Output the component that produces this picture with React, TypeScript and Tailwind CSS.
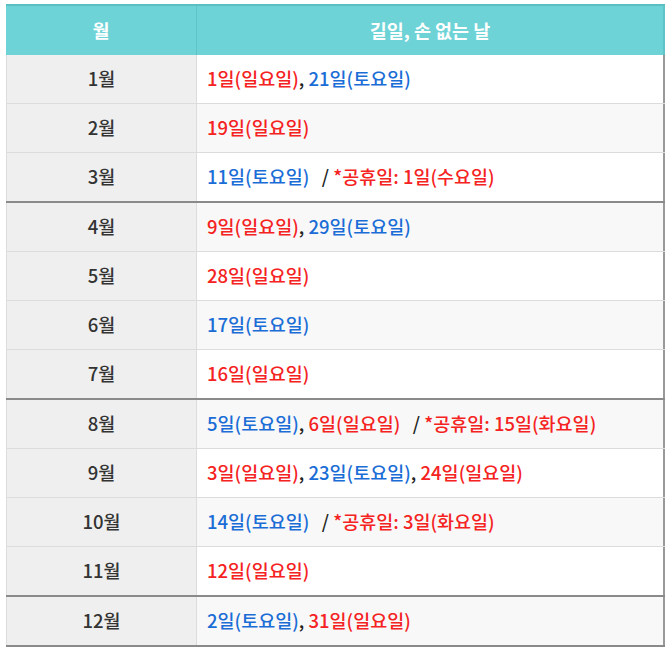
import React from "react";

type Part = { text: string; tone: "red" | "blue" | "black" };

type Row = {
  month: string;
  parts: Part[];
  thick?: boolean;
};

const r = (text: string): Part => ({ text, tone: "red" });
const b = (text: string): Part => ({ text, tone: "blue" });
const k = (text: string): Part => ({ text, tone: "black" });

const rows: Row[] = [
  { month: "1월", parts: [r("1일(일요일)"), k(", "), b("21일(토요일)")] },
  { month: "2월", parts: [r("19일(일요일)")] },
  { month: "3월", parts: [b("11일(토요일)"), k("\u00a0\u00a0 / "), r("*공휴일: 1일(수요일)")], thick: true },
  { month: "4월", parts: [r("9일(일요일)"), k(", "), b("29일(토요일)")] },
  { month: "5월", parts: [r("28일(일요일)")] },
  { month: "6월", parts: [b("17일(토요일)")] },
  { month: "7월", parts: [r("16일(일요일)")], thick: true },
  { month: "8월", parts: [b("5일(토요일)"), k(", "), r("6일(일요일)"), k("\u00a0\u00a0 / "), r("*공휴일: 15일(화요일)")] },
  { month: "9월", parts: [r("3일(일요일)"), k(", "), b("23일(토요일)"), k(", "), r("24일(일요일)")] },
  { month: "10월", parts: [b("14일(토요일)"), k("\u00a0\u00a0 / "), r("*공휴일: 3일(화요일)")] },
  { month: "11월", parts: [r("12일(일요일)")], thick: true },
  { month: "12월", parts: [b("2일(토요일)"), k(", "), r("31일(일요일)")], thick: true },
];

const toneClass = {
  red: "text-[#f52222]",
  blue: "text-[#1a6dd6]",
  black: "text-[#222]",
};

export default function App() {
  return (
    <div
      className="min-h-screen bg-white pl-[6px] pt-[4px]"
      style={{ fontFamily: '"Noto Sans CJK KR", "Noto Sans", sans-serif' }}
    >
      <div className="w-[659px]">
        <div className="flex h-[51px] border-t-2 border-[#5abfc3] bg-[#6dd3d6] text-[18.5px] font-bold text-white">
          <div className="flex w-[191px] items-center justify-center border-r border-[#5fc4c8]">월</div>
          <div className="flex flex-1 items-center justify-center border-r-2 border-[#5fc4c8]">길일, 손 없는 날</div>
        </div>
        {rows.map((row, i) => (
          <div
            key={row.month}
            className={`flex h-[49px] ${row.thick ? "h-[50px] border-b-2 border-[#8a8a8a]" : "border-b border-[#dcdcdc]"}`}
          >
            <div className="flex w-[191px] items-center justify-center border-x border-[#dcdcdc] bg-[#efefef] text-[18.5px] font-medium text-[#333]">
              {row.month}
            </div>
            <div
              className={`flex flex-1 items-center border-r-2 border-[#999] pl-[10px] text-[18.5px] font-medium ${
                i % 2 === 0 ? "bg-white" : "bg-[#f8f8f8]"
              }`}
            >
              <span className="whitespace-pre">
                {row.parts.map((p, j) => (
                  <span key={j} className={toneClass[p.tone]}>
                    {p.text}
                  </span>
                ))}
              </span>
            </div>
          </div>
        ))}
      </div>
    </div>
  );
}
